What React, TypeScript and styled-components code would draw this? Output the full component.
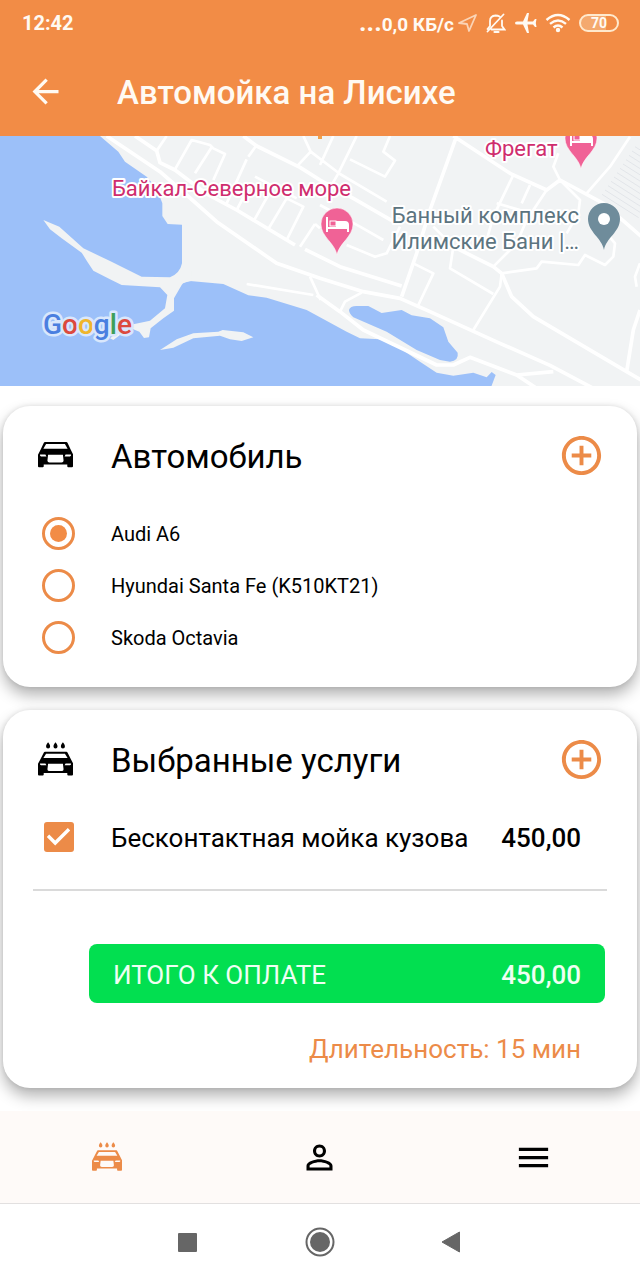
import React, { useState } from "react";
import styled, { createGlobalStyle } from "styled-components";
import { MdAddCircleOutline, MdArrowBack, MdMenu, MdPersonOutline } from "react-icons/md";

const ORANGE = "#f28c46";
const ACCENT = "#ec8b48";

const GlobalStyle = createGlobalStyle`
  *, *::before, *::after { box-sizing: border-box; }
  body { margin: 0; background: #fff; color: #000; font-family: Roboto, "Noto Sans", sans-serif; }
  button { border: 0; padding: 0; background: none; color: inherit; font: inherit; cursor: pointer; }
  svg { display: block; flex: none; }
`;

const Page = styled.div`
  display: flex;
  flex-direction: column;
  min-height: 100vh;
`;

const Header = styled.header`
  background: ${ORANGE};
  color: #fffaf3;
`;

const StatusBar = styled.div`
  display: flex;
  align-items: center;
  justify-content: space-between;
  height: 48px;
  padding: 0 21px 2px 22px;
  font-size: 20px;
  line-height: 24px;
  font-weight: 700;
`;

const StatusIcons = styled.div`
  display: flex;
  align-items: center;
  gap: 8px;
`;

const Traffic = styled.span`
  display: flex;
  align-items: baseline;
  margin-right: -4px;
  font-size: 19px;
`;

const Dots = styled.span`
  font-size: 26px;
  line-height: 24px;
`;

const AppBar = styled.div`
  display: flex;
  align-items: center;
  gap: 52px;
  height: 88px;
  padding: 0 26px 2px;
`;

const BackButton = styled.button`
  display: flex;
`;

const Title = styled.h1`
  margin: 0;
  padding-top: 4px;
  font-size: 33px;
  line-height: 40px;
  font-weight: 500;
`;

const MapSvg = styled.svg`
  width: 100%;
  height: 250px;
  background: #f1f3f4;
`;

const MapLabel = styled.text<{ $color: string }>`
  font-family: Roboto, "Noto Sans", sans-serif;
  font-size: 22px;
  fill: ${(p) => p.$color};
  stroke: #fff;
  stroke-width: 4px;
  stroke-linejoin: round;
  paint-order: stroke;
`;

const MapLogo = styled.text`
  font-family: Roboto, sans-serif;
  font-size: 28px;
  font-weight: 500;
  stroke: #d9e7fc;
  stroke-width: 5px;
  stroke-linejoin: round;
  paint-order: stroke;
`;

const Main = styled.main`
  display: flex;
  flex: 1;
  flex-direction: column;
  gap: 23px;
  padding: 20px 3px 23px;
  overflow: hidden;
`;

const Card = styled.section`
  padding: 0 30px 23px;
  border-radius: 27px;
  background: #fff;
  box-shadow: 0 8px 15px rgba(0, 0, 0, 0.3), 0 0 5px rgba(0, 0, 0, 0.1);
`;

const CardHeader = styled.div`
  display: flex;
  align-items: center;
  height: 98px;
  padding-right: 2px;
`;

const HeadIcon = styled.span`
  display: flex;
  justify-content: center;
  width: 45px;
  margin-right: 33px;
`;

const CardTitle = styled.h2`
  flex: 1;
  margin: 0;
  padding-top: 4px;
  font-size: 33px;
  line-height: 40px;
  font-weight: 400;
`;

const AddButton = styled.button`
  display: flex;
  color: ${ACCENT};
`;

const CarList = styled.div`
  padding-top: 4px;
`;

const OptionRow = styled.label<{ $height: number; $size: number }>`
  display: flex;
  align-items: center;
  height: ${(p) => p.$height}px;
  font-size: ${(p) => p.$size}px;
  line-height: 32px;
  cursor: pointer;
`;

const Lead = styled.span`
  display: flex;
  justify-content: center;
  width: 51px;
  margin-right: 27px;
  padding-bottom: 2px;
`;

const Radio = styled.input`
  appearance: none;
  display: grid;
  place-items: center;
  width: 33px;
  height: 33px;
  margin: 0;
  border: 3px solid ${ACCENT};
  border-radius: 50%;

  &:checked::before {
    content: "";
    width: 17px;
    height: 17px;
    border-radius: 50%;
    background: ${ORANGE};
  }
`;

const Checkbox = styled.input`
  appearance: none;
  width: 30px;
  height: 30px;
  margin: 0;
  border: 3px solid ${ACCENT};
  border-radius: 3px;

  &:checked {
    border: 0;
    background: ${ACCENT};
  }

  &:checked::before {
    content: "";
    display: block;
    width: 100%;
    height: 100%;
    background: #fff;
    clip-path: polygon(39% 78%, 11% 50%, 19% 42%, 39% 62%, 81% 20%, 89% 28%);
  }
`;

const Services = styled.div`
  padding-bottom: 21px;
  border-bottom: 2px solid #dadada;
`;

const Price = styled.span`
  margin-left: auto;
  padding-right: 26px;
  font-weight: 500;
`;

const Total = styled.div`
  display: flex;
  align-items: center;
  justify-content: space-between;
  height: 59px;
  margin: 53px 2px 0 56px;
  padding: 2px 24px 0;
  border-radius: 8px;
  background: #02df50;
  color: #effff3;
  font-size: 26px;
  line-height: 32px;
`;

const TotalValue = styled.strong`
  font-weight: 500;
`;

const Duration = styled.p`
  margin: 30px 26px 0 0;
  color: ${ACCENT};
  font-size: 26px;
  line-height: 32px;
  text-align: right;
`;

const TabBar = styled.nav`
  display: flex;
  height: 93px;
  border-bottom: 1px solid #e2e0e0;
  background: #fefaf8;
`;

const Tab = styled.button<{ $active?: boolean }>`
  display: flex;
  flex: 1;
  align-items: center;
  justify-content: center;
  color: ${(p) => (p.$active ? ACCENT : "#000")};
`;

const SystemBar = styled.div`
  display: flex;
  justify-content: center;
  height: 76px;
  color: #666;
`;

const SystemButton = styled.button`
  display: flex;
  align-items: center;
  justify-content: center;
  width: 133px;
`;

const CAR =
  "M21 0H84Q87 0 88 3L97 22L104 36V72Q104 75 101 75H90Q87 75 87 72V67H17V72Q17 75 14 75H3Q0 75 0 72V38L8 22L17 3Q18 0 21 0Z" +
  "M24 6H80L88 20H16Z" +
  "M6 37H22L25 43H9Q5 42 6 37ZM98 37H82L79 43H95Q99 42 98 37Z" +
  "M30 38H74L76 55Q76 61 70 61H34Q28 61 28 55Z";

const DROP = "M0 0C3 4 6 8 6 12A6 6 0 0 1-6 12C-6 8-3 4 0 0Z";

const CarIcon = ({ size }: { size: number }) => (
  <svg width={size} height={size} viewBox="0 0 104 104" fill="currentColor" aria-hidden="true">
    <path d={CAR} fillRule="evenodd" transform="translate(0 12)" />
  </svg>
);

const CarWashIcon = ({ size }: { size: number }) => (
  <svg width={size} height={size} viewBox="0 0 104 104" fill="currentColor" aria-hidden="true">
    <path d={CAR} fillRule="evenodd" transform="translate(0 29) scale(1 .94)" />
    <path d={DROP} transform="translate(30 1)" />
    <path d={DROP} transform="translate(52 1)" />
    <path d={DROP} transform="translate(74 1)" />
  </svg>
);

const PIN = "M0 0C-2-12-16-18-16-31A16 16 0 1 1 16-31C16-18 2-12 0 0Z";

const HotelPin = ({ x, y }: { x: number; y: number }) => (
  <g transform={`translate(${x} ${y})`}>
    <path d={PIN} fill="#f06296" stroke="#fff" strokeOpacity=".5" />
    <path
      d="M-10-38V-23M-10-27H11M11-23V-30Q11-33 8-33H0V-27"
      fill="none"
      stroke="#fff"
      strokeWidth="2"
    />
    <path d="M0-33H8Q11-33 11-30V-27H0Z" fill="#fff" />
    <rect x="-7" y="-34" width="6" height="5" fill="none" stroke="#fff" strokeWidth="1" />
  </g>
);

const hatch = Array.from({ length: 12 }, (_, i) => {
  const x = 1905 - i * 9;
  const y = 50 + i * 13;
  return `M${x} ${y}L${x + 110} ${y + 70}`;
}).join("");

const AreaMap = () => (
  <MapSvg viewBox="0 0 640 250" preserveAspectRatio="xMidYMid slice" role="img" aria-label="Карта">
    <rect width="640" height="250" fill="#f1f3f4" />
    <g transform="translate(0 -6) scale(.33333)" fill="none" strokeLinejoin="round">
      <path
        fill="#9cc0f9"
        d="M0 0H280L300 18L355 65L375 95L440 140L470 175L487 220V258L503 282L546 284V400L548 460L570 453L670 462L745 496L800 503L920 540L960 562L1040 605L1080 625L1140 628L1200 655L1260 695L1310 728L1360 737L1420 728L1460 742L1475 726L1487 735L1470 780H0Z"
      />
      <path
        fill="#f1f3f4"
        d="M130 270L178 290L250 355L330 393L425 440L510 442Q540 430 546 400L575 420V453Q550 455 545 465L522 505V542L490 565L452 595L447 622L432 624L418 605L400 598L380 600L340 630L330 625L375 590L400 583L450 572L495 535L502 495L480 472L365 465L330 448L280 422L262 395L245 368L185 325L150 298Z"
      />
      <path
        fill="#f1f3f4"
        d="M480 660L530 628L580 610L655 605L668 600L730 607L760 622L725 633L690 628L660 617L580 625L520 653Z"
      />
      <path
        fill="#9cc0f9"
        d="M1047 540Q1050 528 1070 528H1105L1145 549L1205 540L1235 556L1290 565L1330 592L1345 635L1373 668Q1377 692 1350 695L1320 690L1250 660L1160 605L1060 562Q1048 552 1047 540Z"
      />
      <path stroke="#e2e5e9" strokeWidth="3" d={hatch} />
      <path
        stroke="#fff"
        strokeWidth="8"
        d="M500 18L470 62M525 118L575 30L630 45L640 55L675 72L640 150M585 130L635 52M740 88L680 220M770 45L745 80M710 240L750 165M760 275L805 195M805 297L860 205L910 230L860 330M945 282L900 350M765 140L890 205M945 282L960 295M910 18L932 65L890 110M932 65L1020 132L1160 215M1000 18L960 105M1070 18L1015 130L975 200M1170 18L1150 65L1185 92L1155 140L1050 88M960 225L1080 290L1150 330M1040 345L1125 380L1160 370L1200 290M1240 400L1300 430L1255 525M1300 290L1360 350L1350 415L1480 492M1675 70L1660 110L1680 150L1740 210L1735 250L1700 310M1540 135L1480 260L1460 330M1590 165L1565 220M1640 180L1580 270L1550 340L1480 410M1490 220L1560 240M1505 430L1610 415L1625 395L1735 405L1755 375L1815 405L1840 380L1845 340L1820 310M1505 430L1500 470L1420 600M1020 545L1035 515L1085 488M740 462L940 495M930 440L962 510M1920 400L1905 440L1910 470M1760 190L1830 110L1890 20"
      />
      <path
        stroke="#fff"
        strokeWidth="11"
        d="M320 18L480 125L560 195L650 275L830 400L960 445L1090 485L1200 505L1290 545L1500 640L1650 706L1780 775M405 18L470 62L480 98L525 120L620 192L710 240L885 345M915 358L1020 410L1205 468M730 18L770 48L900 112L960 150L1060 205L1190 280M1370 18L1290 240L1250 370L1205 500M1360 18L1530 130L1640 180L1680 150L1810 220L1930 325M1360 350L1480 410L1505 430L1535 500L1600 560L1880 725L1940 760M950 495L1020 545L1090 600L1310 705L1360 705L1410 682L1550 735L1660 725M1550 735L1610 775M1920 540L1900 600L1880 725"
      />
    </g>
    <rect x="318" y="0" width="4" height="3" fill="#f0a04a" />
    <MapLabel $color="#cf2d6e" x="112" y="60">Байкал-Северное море</MapLabel>
    <MapLabel $color="#cf2d6e" x="485" y="20">Фрегат</MapLabel>
    <MapLabel $color="#5c7480" x="579" y="87" textAnchor="end">Банный комплекс</MapLabel>
    <MapLabel $color="#5c7480" x="579" y="113" textAnchor="end">Илимские Бани |…</MapLabel>
    <HotelPin x={337} y={119} />
    <HotelPin x={581} y={33} />
    <g transform="translate(604 114)">
      <path d={PIN} fill="#6f8c9b" />
      <circle cy="-31" r="6" fill="#fff" />
    </g>
    <MapLogo x="43" y="198">
      <tspan fill="#4a7fe0">G</tspan>
      <tspan fill="#dc4a3e">o</tspan>
      <tspan fill="#efb52c">o</tspan>
      <tspan fill="#4a7fe0">g</tspan>
      <tspan fill="#3d9f5a">l</tspan>
      <tspan fill="#dc4a3e">e</tspan>
    </MapLogo>
  </MapSvg>
);

const LocationIcon = () => (
  <svg width="20" height="20" viewBox="0 0 20 20" fill="none" stroke="currentColor" strokeWidth="1.8" strokeOpacity=".65" strokeLinejoin="round">
    <path d="M18 2L1 10L9 11L11 18Z" />
  </svg>
);

const MutedIcon = () => (
  <svg width="20" height="21" viewBox="0 0 20 21" fill="none" stroke="currentColor" strokeWidth="1.8" strokeLinecap="round">
    <path d="M4 13V8Q4 3 9.500 2.500Q12 2.500 13.500 3.500M16 7.500V13L18.500 16.500H5.500M1.500 18.500L17.500 1.500M1.500 16L4 13" />
    <path d="M8.500 19H12.500" strokeWidth="2.200" />
  </svg>
);

const PlaneIcon = () => (
  <svg width="23" height="24" viewBox="0 0 23 24" fill="currentColor">
    <path d="M1 12Q1 10.500 3 10.500H9L13 2H15L13.500 10.500H19L21 8H22.500L21.800 12L22.500 16H21L19 13.500H13.500L15 22H13L9 13.500H3Q1 13.500 1 12Z" />
  </svg>
);

const WifiIcon = () => (
  <svg width="26" height="20" viewBox="0 0 26 20" fill="none" stroke="currentColor" strokeWidth="2.400">
    <path d="M1.500 7Q13-3 24.500 7M5 10.800Q13 4 21 10.800M8.500 14.500Q13 10.500 17.500 14.500" />
    <circle cx="13" cy="17" r="2.200" fill="currentColor" stroke="none" />
  </svg>
);

const Battery = styled.span`
  display: grid;
  place-items: center;
  width: 40px;
  height: 18px;
  border: 2px solid #ffe9cd;
  border-radius: 9px;
  background: linear-gradient(to right, #f4a96f 70%, transparent 70%);
  font-size: 14px;
  line-height: 14px;
`;

const cars = ["Audi A6", "Hyundai Santa Fe (K510KT21)", "Skoda Octavia"];

export default function App() {
  const [car, setCar] = useState(cars[0]);
  const [wash, setWash] = useState(true);

  return (
    <Page>
      <GlobalStyle />
      <Header>
        <StatusBar>
          <span>12:42</span>
          <StatusIcons>
            <Traffic>
              <Dots>...</Dots>0,0 КБ/с
            </Traffic>
            <LocationIcon />
            <MutedIcon />
            <PlaneIcon />
            <WifiIcon />
            <Battery>70</Battery>
          </StatusIcons>
        </StatusBar>
        <AppBar>
          <BackButton aria-label="Назад">
            <MdArrowBack size={39} />
          </BackButton>
          <Title>Автомойка на Лисихе</Title>
        </AppBar>
      </Header>
      <AreaMap />
      <Main>
        <Card>
          <CardHeader>
            <HeadIcon>
              <CarIcon size={35} />
            </HeadIcon>
            <CardTitle>Автомобиль</CardTitle>
            <AddButton aria-label="Добавить автомобиль">
              <MdAddCircleOutline size={47} />
            </AddButton>
          </CardHeader>
          <CarList>
            {cars.map((name) => (
              <OptionRow key={name} $height={52} $size={20}>
                <Lead>
                  <Radio type="radio" name="car" checked={car === name} onChange={() => setCar(name)} />
                </Lead>
                {name}
              </OptionRow>
            ))}
          </CarList>
        </Card>
        <Card>
          <CardHeader>
            <HeadIcon>
              <CarWashIcon size={35} />
            </HeadIcon>
            <CardTitle>Выбранные услуги</CardTitle>
            <AddButton aria-label="Добавить услугу">
              <MdAddCircleOutline size={47} />
            </AddButton>
          </CardHeader>
          <Services>
            <OptionRow $height={60} $size={26}>
              <Lead>
                <Checkbox type="checkbox" checked={wash} onChange={() => setWash(!wash)} />
              </Lead>
              Бесконтактная мойка кузова
              <Price>450,00</Price>
            </OptionRow>
          </Services>
          <Total>
            <span>ИТОГО К ОПЛАТЕ</span>
            <TotalValue>450,00</TotalValue>
          </Total>
          <Duration>Длительность: 15 мин</Duration>
        </Card>
      </Main>
      <TabBar>
        <Tab $active aria-label="Автомойки">
          <CarWashIcon size={30} />
        </Tab>
        <Tab aria-label="Профиль">
          <MdPersonOutline size={39} />
        </Tab>
        <Tab aria-label="Меню">
          <MdMenu size={39} />
        </Tab>
      </TabBar>
      <SystemBar>
        <SystemButton aria-label="Недавние">
          <svg width="19" height="19" viewBox="0 0 19 19" fill="currentColor">
            <rect width="19" height="19" rx="1" />
          </svg>
        </SystemButton>
        <SystemButton aria-label="Домой">
          <svg width="30" height="30" viewBox="0 0 30 30" fill="currentColor">
            <circle cx="15" cy="15" r="10" />
            <circle cx="15" cy="15" r="13.500" fill="none" stroke="currentColor" strokeWidth="2" />
          </svg>
        </SystemButton>
        <SystemButton aria-label="Назад">
          <svg width="24" height="22" viewBox="0 0 24 22" fill="currentColor" stroke="currentColor" strokeWidth="1" strokeLinejoin="round">
            <path d="M1 11L18.500 1V21Z" />
          </svg>
        </SystemButton>
      </SystemBar>
    </Page>
  );
}
